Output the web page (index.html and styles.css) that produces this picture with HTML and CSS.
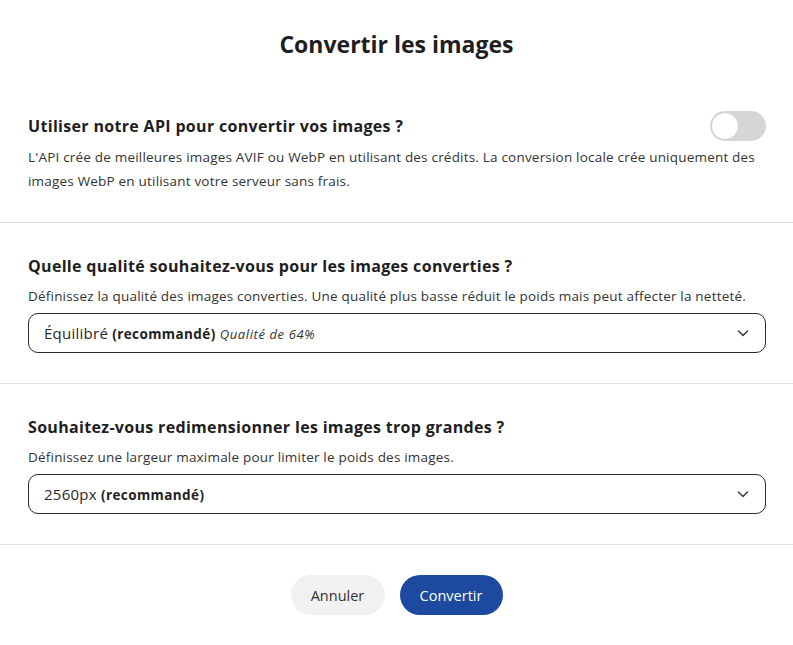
FILE: index.html
```html
<!DOCTYPE html>
<html lang="fr">
<head>
<meta charset="utf-8">
<title>Convertir les images</title>
<link rel="stylesheet" href="styles.css">
</head>
<body>
<div class="modal">
  <h1 class="title">Convertir les images</h1>

  <section class="section first">
    <div class="row">
      <h2 class="heading">Utiliser notre API pour convertir vos images ?</h2>
      <span class="toggle"><span class="knob"></span></span>
    </div>
    <p class="desc">L'API crée de meilleures images AVIF ou WebP en utilisant des crédits. La conversion locale crée uniquement des images WebP en utilisant votre serveur sans frais.</p>
  </section>

  <section class="section">
    <h2 class="heading">Quelle qualité souhaitez-vous pour les images converties ?</h2>
    <p class="desc">Définissez la qualité des images converties. Une qualité plus basse réduit le poids mais peut affecter la netteté.</p>
    <div class="select">
      <span class="value">Équilibré <b class="rec">(recommandé)</b> <i class="note">Qualité de 64%</i></span>
      <svg class="chev" width="14" height="14" viewBox="0 0 14 14"><path d="M2.5 5 L7 9.5 L11.5 5" fill="none" stroke="#444" stroke-width="1.6" stroke-linecap="round" stroke-linejoin="round"/></svg>
    </div>
  </section>

  <section class="section">
    <h2 class="heading">Souhaitez-vous redimensionner les images trop grandes ?</h2>
    <p class="desc">Définissez une largeur maximale pour limiter le poids des images.</p>
    <div class="select">
      <span class="value">2560px <b class="rec">(recommandé)</b></span>
      <svg class="chev" width="14" height="14" viewBox="0 0 14 14"><path d="M2.5 5 L7 9.5 L11.5 5" fill="none" stroke="#444" stroke-width="1.6" stroke-linecap="round" stroke-linejoin="round"/></svg>
    </div>
  </section>

  <footer class="footer">
    <button class="btn cancel">Annuler</button>
    <button class="btn primary">Convertir</button>
  </footer>
</div>
</body>
</html>
```

FILE: styles.css
```css
* { box-sizing: border-box; }
html, body {
  margin: 0;
  padding: 0;
  background: #ffffff;
}
body {
  font-family: "Open Sans", "DejaVu Sans", sans-serif;
  color: #1e1e1e;
}
.modal {
  width: 793px;
}
.title {
  margin: 29px 0 0;
  height: 54px;
  font-size: 23px;
  line-height: 30px;
  font-weight: 700;
  text-align: center;
  color: #1e1e1e;
}
.section {
  padding: 31px 27px 30px 28px;
  border-bottom: 1px solid #dedede;
}
.section.first {
  padding-top: 28px;
  padding-bottom: 29px;
}
.row {
  display: flex;
  align-items: center;
  justify-content: space-between;
  height: 30px;
}
.heading {
  margin: 0;
  font-size: 16px;
  line-height: 24px;
  font-weight: 700;
  letter-spacing: 0.32px;
  color: #1e1e1e;
}
.desc {
  margin: 6px 0 0;
  font-size: 13.5px;
  line-height: 24px;
  letter-spacing: 0.2px;
  color: #333333;
}
.first .desc {
  margin-top: 4px;
}
.toggle {
  width: 56px;
  height: 30px;
  border-radius: 15px;
  background: #d6d6d6;
  padding: 2px;
  display: flex;
  align-items: center;
}
.knob {
  width: 26px;
  height: 26px;
  border-radius: 50%;
  background: #ffffff;
  box-shadow: 0 0 1px rgba(0,0,0,0.15);
}
.select {
  margin-top: 5px;
  height: 40px;
  border: 1px solid #2a2a2a;
  border-radius: 10px;
  display: flex;
  align-items: center;
  justify-content: space-between;
  padding: 0 15px 0 15px;
}
.value {
  font-size: 15px;
  letter-spacing: 0.25px;
  color: #2a2a2a;
}
.rec {
  font-size: 13.5px;
  font-weight: 700;
  letter-spacing: 0.4px;
  color: #1e1e1e;
}
.note {
  font-size: 13px;
  letter-spacing: 0.6px;
  color: #333;
}
.chev { display: block; }
.footer {
  display: flex;
  justify-content: center;
  gap: 15px;
  padding-top: 30px;
}
.btn {
  height: 40px;
  border: none;
  border-radius: 20px;
  font-family: inherit;
  font-size: 14.5px;
  padding: 0 10px;
}
.cancel {
  background: #f1f1f1;
  color: #333;
  width: 94px;
}
.primary {
  background: #1b4aa0;
  color: #ffffff;
  width: 103px;
}
```
